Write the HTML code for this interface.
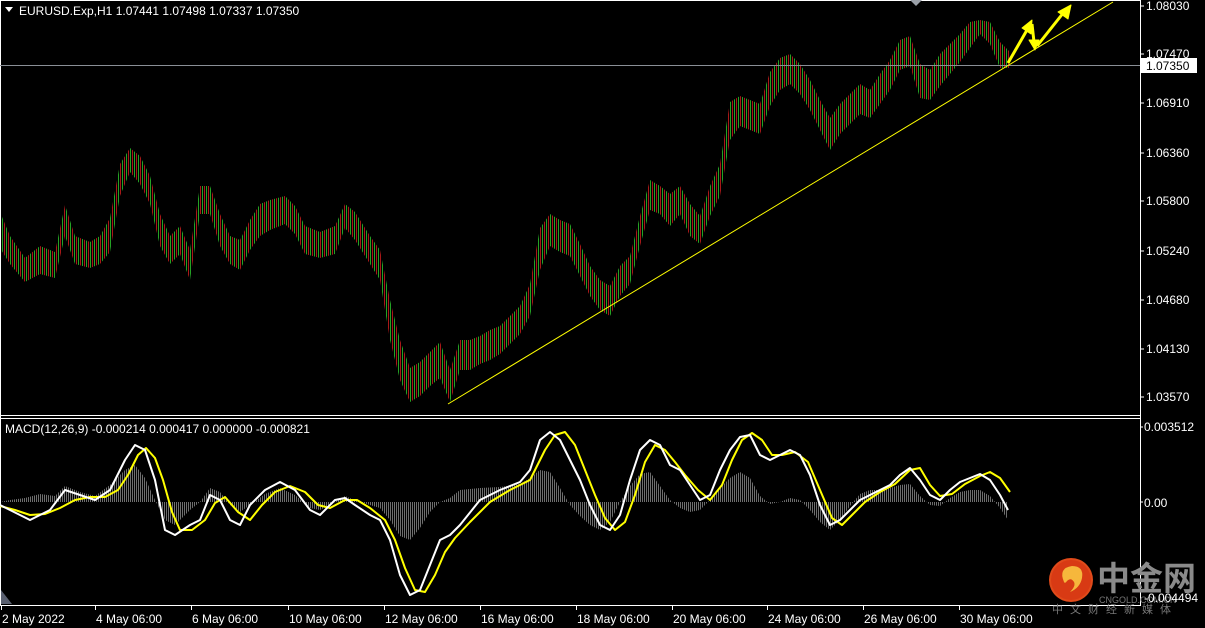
<!DOCTYPE html>
<html><head><meta charset="utf-8"><style>
html,body{margin:0;padding:0;background:#000;width:1205px;height:628px;overflow:hidden}
svg{display:block}
text{font-family:"Liberation Sans","Noto Sans CJK SC",sans-serif;font-size:12px;fill:#fff}
</style></head><body>
<svg width="1205" height="628" viewBox="0 0 1205 628" xmlns="http://www.w3.org/2000/svg">
<defs>
<pattern id="bp" width="4" height="6" patternUnits="userSpaceOnUse">
<rect x="0" y="0" width="1" height="6" fill="#e02020"/>
<rect x="2" y="0" width="1" height="6" fill="#30d830"/>
</pattern>
<pattern id="hp" width="2" height="4" patternUnits="userSpaceOnUse">
<rect x="0" y="0" width="1" height="4" fill="#8a8a8a"/>
</pattern>
</defs>
<rect width="1205" height="628" fill="#000"/>
<!-- price band -->
<polygon fill="url(#bp)" opacity="0.75" points="0,212 10,236 25,258 40,246 55,252 65,205 75,236 90,242 100,236 110,218 120,164 130,148 140,156 150,176 160,214 170,236 180,226 190,250 200,186 210,186 220,214 230,236 240,240 250,220 260,204 270,200 285,196 295,206 305,226 320,232 335,226 345,204 355,212 370,236 380,250 390,300 400,340 410,368 420,362 430,352 440,342 450,370 460,340 470,340 480,336 490,330 500,326 510,316 520,306 530,284 540,228 550,214 560,220 570,224 580,244 590,266 600,280 610,286 620,266 630,256 640,216 650,180 660,186 670,194 680,186 690,204 700,216 710,186 720,164 730,102 740,96 750,100 760,104 770,72 780,58 790,54 800,64 810,80 820,100 830,118 840,104 850,94 860,84 870,90 880,74 890,60 900,40 910,36 920,64 930,70 940,54 950,44 960,34 970,22 980,20 990,22 1000,42 1010,52
1010,68 1000,68 990,44 980,34 970,48 960,62 950,74 940,86 930,100 920,98 910,66 900,70 890,90 880,104 870,118 860,114 850,124 840,134 830,150 820,130 810,110 800,94 790,84 780,90 770,106 760,134 750,130 740,126 730,140 720,196 710,216 700,244 690,236 680,214 670,226 660,214 650,210 640,246 630,284 620,296 610,316 600,310 590,296 580,276 570,256 560,252 550,246 540,270 530,316 520,334 510,344 500,354 490,360 480,364 470,370 460,370 450,402 440,378 430,386 420,396 410,402 400,380 390,340 380,280 370,264 355,240 345,228 335,254 320,258 305,254 295,234 285,224 270,230 260,236 250,250 240,270 230,264 220,246 210,214 200,214 190,280 180,254 170,264 160,246 150,204 140,184 130,172 120,196 110,252 100,264 90,268 75,264 65,236 55,278 40,274 25,282 10,264 0,248"/>
<!-- MACD histogram -->
<polygon fill="url(#hp)" opacity="0.8" points="0,502 10,500 25,498 40,494 55,496 65,486 80,492 95,496 110,485 125,470 135,465 145,478 155,500 165,520 175,525 190,510 200,502 210,488 220,492 230,505 240,512 250,505 265,494 280,488 295,495 310,508 320,510 335,502 345,496 355,500 370,505 380,508 390,520 400,536 410,540 420,528 430,512 440,502 450,498 460,490 480,488 500,487 520,484 530,478 540,470 550,472 560,488 570,505 580,516 590,525 600,530 610,522 620,502 630,486 640,474 650,472 660,486 670,500 680,508 690,512 700,510 710,500 720,488 730,478 740,472 750,478 760,496 770,504 780,502 790,498 800,500 810,510 820,522 830,530 840,520 850,506 860,494 870,490 880,490 890,488 900,485 910,484 920,496 930,505 940,506 950,498 960,492 970,490 980,490 990,496 1000,508 1008,520 1008,502 0,502"/>
<!-- borders -->
<line x1="0" y1="0.5" x2="1140" y2="0.5" stroke="#fff"/>
<line x1="0.5" y1="0" x2="0.5" y2="606" stroke="#fff"/>
<line x1="1140.5" y1="0" x2="1140.5" y2="606" stroke="#fff"/>
<line x1="0" y1="415.5" x2="1140" y2="415.5" stroke="#fff"/>
<line x1="0" y1="418.5" x2="1140" y2="418.5" stroke="#fff"/>
<line x1="0" y1="605.5" x2="1140" y2="605.5" stroke="#fff"/>
<line x1="0" y1="65.5" x2="1140" y2="65.5" stroke="#8a8f96"/>
<line x1="448" y1="404" x2="1113" y2="2" stroke="#ffff00" stroke-width="1"/>
<g fill="#ffff00" stroke="#ffff00" stroke-width="3" stroke-linejoin="round">
<polyline points="1008,63 1027,30" fill="none"/>
<polygon points="1022,28 1032,20 1031,34" stroke-width="1"/>
<polyline points="1032,24 1034,42" fill="none"/>
<polygon points="1029,40 1035,50 1039,40" stroke-width="1"/>
<polyline points="1037,46 1064,12" fill="none"/>
<polygon points="1058,12 1071,5 1068,19" stroke-width="1"/>
</g>
<polygon points="910,0 922,0 916,6" fill="#9aa0a8"/>
<polygon points="1,590 1,604 12,604" fill="#5a6070"/>
<!-- MACD lines -->
<polyline fill="none" stroke="#ffff00" stroke-width="2" stroke-linejoin="round" points="0,506 15,510 30,515 45,514 60,508 75,500 90,497 105,497 118,490 128,475 138,455 146,448 155,458 163,480 172,512 180,530 192,530 205,520 215,503 225,497 238,512 250,520 262,505 275,492 290,486 305,492 318,505 330,508 345,500 357,500 370,508 385,520 395,540 405,568 415,590 425,592 435,575 445,552 455,538 470,522 490,502 510,490 530,480 545,450 555,435 565,432 575,445 585,470 595,495 605,518 615,530 625,522 635,495 645,462 655,445 665,450 675,462 685,475 698,490 710,500 722,485 732,460 742,440 752,433 762,440 772,455 782,455 795,452 808,462 820,490 832,518 842,525 852,515 865,502 880,492 895,484 910,470 920,468 930,485 940,496 952,494 965,484 980,476 990,472 1000,478 1010,492"/>
<polyline fill="none" stroke="#ffffff" stroke-width="2" stroke-linejoin="round" points="0,505 20,515 30,520 50,510 65,490 80,495 95,500 110,490 125,460 135,445 145,450 155,480 165,530 175,535 190,525 200,520 210,495 220,500 230,520 240,525 250,505 265,490 280,482 295,490 310,510 320,515 335,500 345,498 355,505 370,515 380,520 390,540 400,575 410,595 420,590 430,565 440,540 450,535 460,525 480,500 500,490 520,482 530,470 540,440 550,432 560,440 570,460 580,480 590,505 600,525 610,530 620,515 630,480 640,450 650,440 660,445 670,465 680,470 690,485 700,500 710,495 720,470 730,450 740,437 750,435 760,455 770,460 780,455 790,450 800,455 810,475 820,505 830,525 840,520 850,510 860,500 870,495 880,490 890,485 900,475 910,468 920,480 930,495 940,500 950,490 960,482 970,478 980,474 990,480 1000,495 1008,510"/>
<!-- header -->
<polygon points="5,7 13,7 9,12" fill="#fff"/>
<text x="19" y="15">EURUSD.Exp,H1  1.07441 1.07498 1.07337 1.07350</text>
<text x="5" y="433">MACD(12,26,9) -0.000214 0.000417 0.000000 -0.000821</text>
<!-- price axis -->
<g stroke="#fff">
<line x1="1140" y1="6" x2="1144" y2="6"/><line x1="1140" y1="54" x2="1144" y2="54"/><line x1="1140" y1="103" x2="1144" y2="103"/><line x1="1140" y1="153" x2="1144" y2="153"/><line x1="1140" y1="201" x2="1144" y2="201"/><line x1="1140" y1="251" x2="1144" y2="251"/><line x1="1140" y1="300" x2="1144" y2="300"/><line x1="1140" y1="349" x2="1144" y2="349"/><line x1="1140" y1="397" x2="1144" y2="397"/>
<line x1="1140" y1="427" x2="1143" y2="427"/><line x1="1140" y1="502" x2="1143" y2="502"/>
</g>
<text x="1146" y="10">1.08030</text>
<text x="1146" y="58">1.07470</text>
<text x="1146" y="107">1.06910</text>
<text x="1146" y="157">1.06360</text>
<text x="1146" y="205">1.05800</text>
<text x="1146" y="255">1.05240</text>
<text x="1146" y="304">1.04680</text>
<text x="1146" y="353">1.04130</text>
<text x="1146" y="401">1.03570</text>
<rect x="1141" y="58" width="56" height="15" fill="#fff"/>
<text x="1146" y="70" style="fill:#000">1.07350</text>
<text x="1144" y="431">0.003512</text>
<text x="1144" y="507">0.00</text>
<!-- watermark -->
<circle cx="1071" cy="580" r="22" fill="#e04a1a"/>
<circle cx="1071" cy="580" r="20" fill="#d83a14"/>
<path d="M1064,582 q-6,-14 8,-16 q12,0 10,12 q-2,10 -12,14 q6,-6 4,-10 q-3,-5 -7,-1 q-2,3 -3,1z" fill="#f6b73c"/>
<text x="1097" y="590" style="font-size:33px;font-weight:bold;fill:#8a8a8a;font-family:'Noto Sans CJK SC',sans-serif">中金网</text>
<text x="1099" y="603" style="font-size:9px;fill:#777">CNGOLD.COM.CN</text>
<text x="1144" y="602">-0.004494</text>
<text x="1052" y="613" style="font-size:11px;fill:#777;letter-spacing:7px;font-family:'Noto Sans CJK SC',sans-serif">中文财经新媒体</text>
<!-- time axis -->
<g stroke="#fff">
<line x1="1.5" y1="606" x2="1.5" y2="610"/><line x1="95.5" y1="606" x2="95.5" y2="610"/><line x1="191.5" y1="606" x2="191.5" y2="610"/><line x1="288.5" y1="606" x2="288.5" y2="610"/><line x1="384.5" y1="606" x2="384.5" y2="610"/><line x1="480.5" y1="606" x2="480.5" y2="610"/><line x1="576.5" y1="606" x2="576.5" y2="610"/><line x1="672.5" y1="606" x2="672.5" y2="610"/><line x1="767.5" y1="606" x2="767.5" y2="610"/><line x1="863.5" y1="606" x2="863.5" y2="610"/><line x1="959.5" y1="606" x2="959.5" y2="610"/>
</g>
<text x="2" y="623">2 May 2022</text>
<text x="96" y="623">4 May 06:00</text>
<text x="192" y="623">6 May 06:00</text>
<text x="289" y="623">10 May 06:00</text>
<text x="385" y="623">12 May 06:00</text>
<text x="481" y="623">16 May 06:00</text>
<text x="577" y="623">18 May 06:00</text>
<text x="673" y="623">20 May 06:00</text>
<text x="768" y="623">24 May 06:00</text>
<text x="864" y="623">26 May 06:00</text>
<text x="960" y="623">30 May 06:00</text>
</svg>
</body></html>
